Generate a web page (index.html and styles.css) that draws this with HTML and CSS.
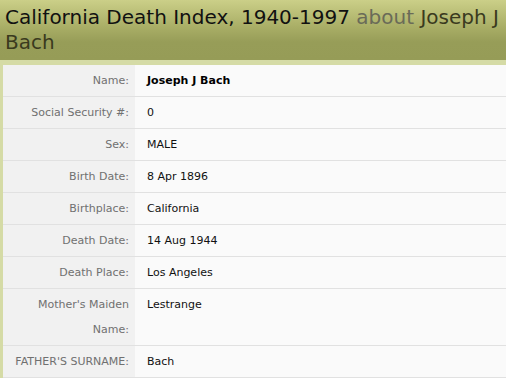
FILE: index.html
```html
<!DOCTYPE html>
<html>
<head>
<meta charset="utf-8">
<link rel="stylesheet" href="styles.css">
</head>
<body>
<header class="page-head">
  <h1 class="title"><span class="title-main">California Death Index, 1940-1997</span> <span class="title-about">about</span> <span class="title-name">Joseph J Bach</span></h1>
</header>
<section class="record">
  <table class="facts">
    <tr><th>Name:</th><td><strong>Joseph J Bach</strong></td></tr>
    <tr><th>Social Security #:</th><td>0</td></tr>
    <tr><th>Sex:</th><td>MALE</td></tr>
    <tr><th>Birth Date:</th><td>8 Apr 1896</td></tr>
    <tr><th>Birthplace:</th><td>California</td></tr>
    <tr><th>Death Date:</th><td>14 Aug 1944</td></tr>
    <tr><th>Death Place:</th><td>Los Angeles</td></tr>
    <tr><th>Mother's Maiden Name:</th><td>Lestrange</td></tr>
    <tr><th>FATHER'S SURNAME:</th><td>Bach</td></tr>
  </table>
</section>
</body>
</html>
```
FILE: styles.css
```css
html, body {
  margin: 0;
  padding: 0;
  background: #d5dba6;
  overflow: hidden;
}
body {
  font-family: "DejaVu Sans", Verdana, sans-serif;
}
.page-head {
  height: 60px;
  background: linear-gradient(to bottom, #cbcf88 0%, #a9ae66 45%, #979d58 70%, #969c57 100%);
}
.title {
  margin: 0;
  padding: 5px 0 0 5px;
  font-size: 20px;
  font-weight: normal;
  line-height: 25px;
  width: 500px;
}
.title-main { color: #111; }
.title-about { color: #6a6b58; }
.title-name { color: #3a3a1e; }
.record {
  padding: 5px 0 0 3px;
}
.facts {
  border-collapse: collapse;
  width: 520px;
  font-size: 11px;
}
.facts th, .facts td {
  border-bottom: 1px solid #e1e1e1;
  line-height: 25px;
  padding: 3px 0 3px 0;
  vertical-align: top;
}
.facts th {
  width: 126px;
  text-align: right;
  font-weight: normal;
  color: #707070;
  background: #f1f1f1;
  padding-right: 6px;
}
.facts td {
  background: #fafafa;
  color: #111;
  padding-left: 12px;
}
.facts strong {
  color: #000;
}
```
